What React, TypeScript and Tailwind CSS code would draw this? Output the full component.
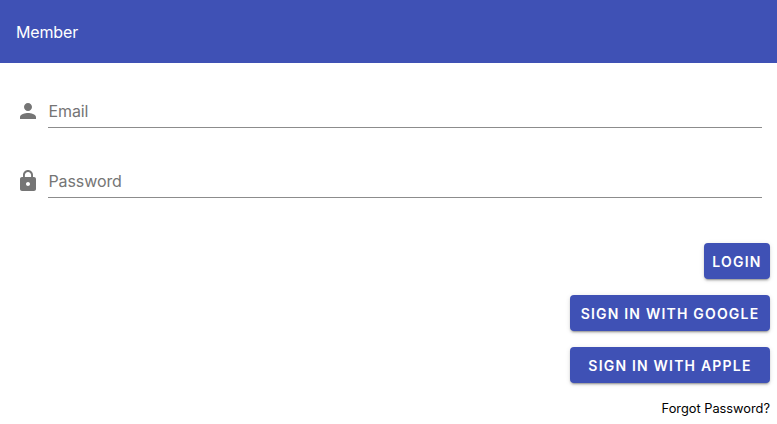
const buttonClass =
  "h-9 rounded bg-[#3f51b5] pt-px text-sm font-semibold uppercase tracking-[1.2px] text-white shadow-[0_3px_1px_-2px_rgba(0,0,0,0.2),0_2px_2px_0_rgba(0,0,0,0.14),0_1px_5px_0_rgba(0,0,0,0.12)]";

function Field({ label, icon }: { label: string; icon: string }) {
  return (
    <div className="flex h-[70px] pl-[15.5px] pr-[15px]">
      <svg viewBox="0 0 24 24" className="mt-[36px] h-6 w-6 shrink-0 fill-[#757575]">
        <path d={icon} />
      </svg>
      <div className="ml-[8.5px] flex h-[65px] flex-1 items-end border-b border-[#8c8c8c] pb-1">
        <span className="pl-[0.5px] text-base leading-6 tracking-[-0.1px] text-[#757575]">{label}</span>
      </div>
    </div>
  );
}

export default function App() {
  return (
    <div className="h-[424px] overflow-hidden bg-white font-['Inter',sans-serif]">
      <header className="flex h-[63px] items-center bg-[#3f51b5] px-4">
        <h1 className="text-base font-normal tracking-[-0.15px] text-white">Member</h1>
      </header>
      <div className="flex flex-col">
        <Field
          label="Email"
          icon="M12 12c2.21 0 4-1.79 4-4s-1.79-4-4-4-4 1.79-4 4 1.79 4 4 4zm0 2c-2.67 0-8 1.34-8 4v2h16v-2c0-2.66-5.33-4-8-4z"
        />
        <Field
          label="Password"
          icon="M18 8h-1V6c0-2.76-2.24-5-5-5S7 3.24 7 6v2H6c-1.1 0-2 .9-2 2v10c0 1.1.9 2 2 2h12c1.1 0 2-.9 2-2V10c0-1.1-.9-2-2-2zm-6 9c-1.1 0-2-.9-2-2s.9-2 2-2 2 .9 2 2-.9 2-2 2zm3.1-9H8.9V6c0-1.71 1.39-3.1 3.1-3.1 1.71 0 3.1 1.39 3.1 3.1v2z"
        />
      </div>
      <div className="mt-10 flex flex-col items-end gap-4 pr-[7px]">
        <button className={`${buttonClass} w-[66px]`}>Login</button>
        <button className={`${buttonClass} w-[200px]`}>Sign in with Google</button>
        <button className={`${buttonClass} w-[200px]`}>Sign in with Apple</button>
        <a href="#" className="text-[12.8px] leading-5 text-black">
          Forgot Password?
        </a>
      </div>
    </div>
  );
}
